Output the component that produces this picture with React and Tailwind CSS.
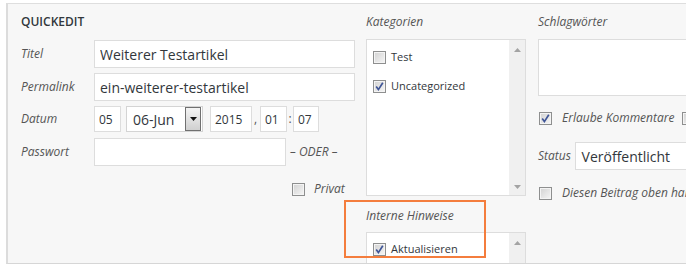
import React from 'react';

const font = { fontFamily: '"Open Sans", "Liberation Sans", sans-serif' };

// Old-style 13px checkbox with optional blue tick
const Check = ({ checked }) => (
  <span className="relative inline-block w-[13px] h-[13px] shrink-0 border border-[#8e8f8f] bg-linear-to-br from-[#d2d2d2] to-[#f6f6f6] shadow-[inset_0_0_0_1px_#f4f4f4]">
    {checked && (
      <svg className="absolute left-0 top-0" width="11" height="11" viewBox="0 0 11 11">
        <path d="M2.2 5.6 L4.4 8.6 L8.8 1.8" fill="none" stroke="#3f5597" strokeWidth="1.7" />
      </svg>
    )}
  </span>
);

const Scrollbar = ({ down = true }) => (
  <div className="w-[16px] shrink-0 bg-[#f0f0f0] flex flex-col justify-between items-center pt-[8px] pb-[6px]">
    <svg width="7" height="4" viewBox="0 0 7 4"><path d="M0 4 L3.5 0 L7 4 Z" fill="#a3a3a3" /></svg>
    {down && <svg width="7" height="4" viewBox="0 0 7 4"><path d="M0 0 L3.5 4 L7 0 Z" fill="#a3a3a3" /></svg>}
  </div>
);

const Label = ({ children, className = '' }) => (
  <span className={`italic text-[12px] leading-[16px] text-[#555] ${className}`}>{children}</span>
);

const inputCls = 'h-[28px] border border-[#dddddd] bg-white px-[5px] text-[14px] text-[#32373c] outline-none';
const smallCls = 'h-[26px] border border-[#dddddd] bg-white px-[4px] text-[12px] text-[#32373c] outline-none';

export default function App() {
  return (
    <div className="w-[686px] h-[264px] bg-white pt-[3px] pl-[6px] overflow-hidden" style={font}>
      <div className="w-[700px] h-[261px] border-t border-t-[#dedede] border-l-2 border-l-[#dcdcdc] border-b border-b-[#d6d6d6] bg-[#f7f7f7] overflow-hidden flex pl-[13px] pt-[10px]">

        {/* Left column: title, permalink, date, password */}
        <div className="w-[345px] shrink-0">
          <div className="text-[12px] leading-[16px] font-semibold text-[#32373c] uppercase">Quickedit</div>

          <div className="mt-[10px] flex items-center h-[28px]">
            <Label className="w-[73px]">Titel</Label>
            <input readOnly defaultValue="Weiterer Testartikel" className={`${inputCls} w-[261px]`} />
          </div>

          <div className="mt-[5px] flex items-center h-[28px]">
            <Label className="w-[73px]">Permalink</Label>
            <input readOnly defaultValue="ein-weiterer-testartikel" className={`${inputCls} w-[261px]`} />
          </div>

          <div className="mt-[5px] flex items-center h-[26px]">
            <Label className="w-[73px]">Datum</Label>
            <input readOnly defaultValue="05" className={`${smallCls} w-[27px]`} />
            <div className="ml-[5px] w-[77px] h-[26px] border border-[#d4d4d4] bg-white flex items-center justify-between pl-[6px] pr-[1px]">
              <span className="text-[14px] text-[#32373c]">06-Jun</span>
              <span className="w-[16px] h-[24px] border border-[#707070] bg-linear-to-b from-[#f4f4f4] to-[#d0d0d0] flex items-center justify-center">
                <svg width="7" height="4" viewBox="0 0 7 4"><path d="M0 0 L3.5 4 L7 0 Z" fill="#111" /></svg>
              </span>
            </div>
            <input readOnly defaultValue="2015" className={`${smallCls} ml-[7px] w-[42px]`} />
            <span className="w-[8px] pl-[2px] text-[12px] text-[#555]">,</span>
            <input readOnly defaultValue="01" className={`${smallCls} w-[27px]`} />
            <span className="w-[6px] text-center text-[12px] text-[#555]">:</span>
            <input readOnly defaultValue="07" className={`${smallCls} w-[26px]`} />
          </div>

          <div className="mt-[6px] flex items-center h-[28px]">
            <Label className="w-[73px]">Passwort</Label>
            <input readOnly defaultValue="" className={`${inputCls} w-[192px]`} />
            <Label className="ml-[4px]">– ODER –</Label>
          </div>

          <div className="mt-[15px] pl-[271px] flex items-center">
            <Check />
            <Label className="ml-[9px]">Privat</Label>
          </div>
        </div>

        {/* Middle column: categories and notes */}
        <div className="w-[160px] shrink-0 relative">
          <Label className="block">Kategorien</Label>
          <div className="mt-[9px] h-[157px] border border-[#dddddd] bg-white flex">
            <div className="flex-1 pl-[6px] pt-[11px] flex flex-col gap-[16px]">
              <div className="flex items-center h-[13px]">
                <Check />
                <span className="ml-[5px] text-[11px] text-[#32373c]">Test</span>
              </div>
              <div className="flex items-center h-[13px]">
                <Check checked />
                <span className="ml-[5px] text-[11px] text-[#32373c]">Uncategorized</span>
              </div>
            </div>
            <Scrollbar />
          </div>

          <Label className="block mt-[12px]">Interne Hinweise</Label>
          <div className="mt-[8px] h-[60px] border border-[#dddddd] bg-white flex">
            <div className="flex-1 pl-[6px] pt-[10px]">
              <div className="flex items-center h-[13px]">
                <Check checked />
                <span className="ml-[5px] text-[11px] text-[#32373c]">Aktualisieren</span>
              </div>
            </div>
            <Scrollbar down={false} />
          </div>

          {/* highlight around the notes field */}
          <div className="absolute left-[-22px] top-[186px] w-[142px] h-[58px] border-2 border-[#f47d3d]" />
        </div>

        {/* Right column: tags, comments, status */}
        <div className="ml-[12px] w-[220px] shrink-0">
          <Label className="block">Schlagwörter</Label>
          <div className="mt-[9px] h-[57px] border border-[#dddddd] bg-white" />

          <div className="mt-[14px] pl-[1px] flex items-center">
            <Check checked />
            <Label className="ml-[10px] whitespace-nowrap">Erlaube Kommentare</Label>
            <span className="ml-[8px] flex"><Check /></span>
          </div>

          <div className="mt-[16px] flex items-center h-[28px]">
            <Label className="w-[40px]">Status</Label>
            <div className="w-[200px] h-[28px] border border-[#dddddd] bg-white pl-[6px] flex items-center text-[14px] text-[#32373c]">
              Veröffentlicht
            </div>
          </div>

          <div className="mt-[15px] pl-[1px] flex items-center">
            <Check />
            <Label className="ml-[10px] whitespace-nowrap">Diesen Beitrag oben halten</Label>
          </div>
        </div>
      </div>
    </div>
  );
}
